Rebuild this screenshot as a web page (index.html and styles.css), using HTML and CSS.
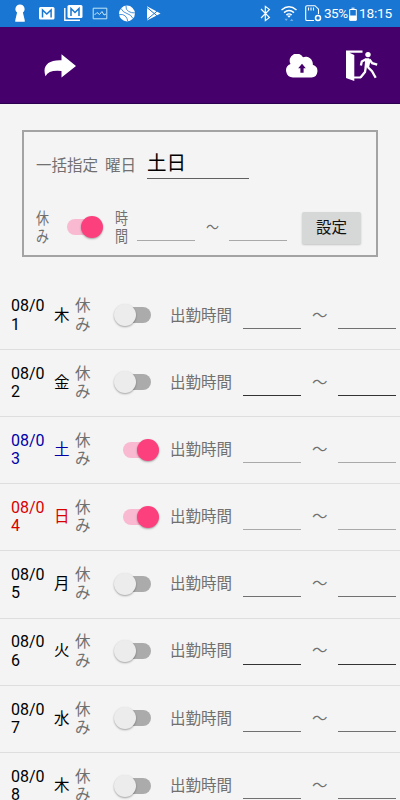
FILE: index.html
```html
<!DOCTYPE html>
<html lang="ja">
<head>
<meta charset="utf-8">
<meta name="viewport" content="width=device-width">
<title>勤務予定</title>
<link rel="stylesheet" href="styles.css">
</head>
<body>
<div class="status">
  <svg class="status-icons" width="170" height="27" viewBox="0 0 170 27" fill="#fff">
    <path d="M20 4.500a4.500 4.500 0 0 1 2.900 8l1.700 7q.5 2.300 0 2.300h-9.200q-.5 0 0-2.300l1.700-7A4.500 4.500 0 0 1 20 4.500z"/>
    <rect x="39" y="7" width="15.500" height="12.500" rx="1.500"/>
    <path d="M42.500 17.500v-7.500l4.300 4 4.300-4v7.500" fill="none" stroke="#1976d2" stroke-width="1.500"/>
    <rect x="67.500" y="5" width="15" height="13" rx="1.500"/>
    <path d="M71 16V8.500l4 4 4-4v7.500" fill="none" stroke="#1976d2" stroke-width="1.500"/>
    <path d="M64.800 8v12.200H80" fill="none" stroke="#fff" stroke-width="1.400"/>
    <path d="M93.200 8.200h13.600v10.600H93.200zM94.500 15l2.500-2.500 2.500 2 2.500-3 2 3.500 2-1" fill="none" stroke="#c4e9f8" stroke-width="1"/>
    <circle cx="127" cy="13.500" r="7.900"/>
    <path d="M121 8.500q2 4 6 5t6 5M126 5.700q-.5 4 2.500 5.700t6.300 1.500M119.300 14.500q4-.5 6 1.500t2.500 5.300" fill="none" stroke="#1976d2" stroke-width=".8"/>
    <path d="M147 6.200v14.400l13.500-7.200z"/>
    <path d="M147 7.500l10 8.300M147 19.500l10-8.300" fill="none" stroke="#1976d2" stroke-width="1"/>
  </svg>
  <div class="status-right">
    <svg width="66" height="27" viewBox="256 0 66 27" fill="none" stroke="#fff" stroke-width="1.100">
      <path d="M260 9l8.500 8.500-4.200 3.200V6.300l4.200 3.200L260 18"/>
      <path d="M280.500 10q7.500-6.500 15 0M283 12.600q5-4.200 10 0M285.300 15q2.700-2.200 5.400 0" stroke-width="1.400"/>
      <path d="M286 15.500h4l-2 2.300z" fill="#fff" stroke="none"/>
      <path d="M283.500 18.800h3.400l-1.700 2.200zM289 21l1.700-2.200 1.700 2.200z" fill="#72aee8" stroke="none"/>
      <path d="M313 20.500h-7q-1.300 0-1.300-1.300V7q0-1.300 1.300-1.300h8l3.500 3.500V14M307.500 7.500v3M310 7.500v3M312.500 7.500v3"/>
      <circle cx="317" cy="18" r="2.500" stroke-width="1.500"/>
    </svg>
    <span class="percent">35%</span>
    <svg class="battery" width="8" height="14" viewBox="0 0 8 14" fill="none" stroke="#fff">
      <path d="M2.500 1.200h3M.7 2.500h6.600v10.800H.7z"/><path d="M1 9h6v4H1z" fill="#fff"/>
    </svg>
    <span class="clock">18:15</span>
  </div>
</div>
<header class="bar">
  <svg class="share" width="32" height="24" viewBox="0 0 32 24" fill="#fff"><path d="M17.500 .2L32 12 17.500 23.400V17Q5 15.500 1.500 22.200C-2 12 4 5.500 17.500 6.200z"/></svg>
  <svg class="cloud" width="32" height="24" viewBox="0 0 32 24" fill="#fff"><path d="M7 23.500a7 7 0 0 1-2.500-13.500A7 7 0 0 1 17 3.300a7.200 7.200 0 0 1 9.800 7.500A6.500 6.500 0 0 1 25.500 23.500z"/><path d="M16 9.700l3.800 4.500h-2.200v4.600h-3.200v-4.600h-2.200z" fill="#45006b"/></svg>
  <svg class="exit" width="33" height="32" viewBox="0 0 33 32" fill="#fff">
    <path d="M0 .5h16.500v2.200H3.500L8.300 5v21.500H15v1.900H8.300v2.600L0 28z"/>
    <circle cx="22" cy="4.600" r="2.700"/>
    <path d="M19 8.200h4.200l1.300 2.800-1.500 6.500h-4.500l.5-6z"/>
    <path d="M19.500 9.500l-3.700 2-.9 4M23.500 9.500l2.700 3.700 5 1.500M19.800 17l-.8 5-4.500 5.500M21.700 17l4.300 4.300 3.700 6.500" fill="none" stroke="#fff" stroke-width="2.300"/>
  </svg>
</header>
<main>
  <section class="bulk">
    <div class="bulk-top"><span>一括指定</span><span>曜日</span><span class="days">土日</span></div>
    <div class="bulk-bottom">
      <span class="narrow">休<br>み</span>
      <span class="switch on"></span>
      <span class="narrow">時<br>間</span>
      <span class="field"></span>
      <span class="narrow">～</span>
      <span class="field"></span>
      <button class="set">設定</button>
    </div>
  </section>
  <ul class="list">
    <li class="row"><span class="date">08/01</span><span class="day">木</span><span class="off">休み</span><span class="switch"></span><span>出勤時間</span><span class="field mid"></span><span class="wave">～</span><span class="field mid"></span></li>
    <li class="row"><span class="date">08/02</span><span class="day">金</span><span class="off">休み</span><span class="switch"></span><span>出勤時間</span><span class="field dark"></span><span class="wave">～</span><span class="field dark"></span></li>
    <li class="row sat"><span class="date">08/03</span><span class="day">土</span><span class="off">休み</span><span class="switch on"></span><span>出勤時間</span><span class="field"></span><span class="wave">～</span><span class="field"></span></li>
    <li class="row sun"><span class="date">08/04</span><span class="day">日</span><span class="off">休み</span><span class="switch on"></span><span>出勤時間</span><span class="field"></span><span class="wave">～</span><span class="field"></span></li>
    <li class="row"><span class="date">08/05</span><span class="day">月</span><span class="off">休み</span><span class="switch"></span><span>出勤時間</span><span class="field mid"></span><span class="wave">～</span><span class="field mid"></span></li>
    <li class="row"><span class="date">08/06</span><span class="day">火</span><span class="off">休み</span><span class="switch"></span><span>出勤時間</span><span class="field dark"></span><span class="wave">～</span><span class="field dark"></span></li>
    <li class="row"><span class="date">08/07</span><span class="day">水</span><span class="off">休み</span><span class="switch"></span><span>出勤時間</span><span class="field mid"></span><span class="wave">～</span><span class="field mid"></span></li>
    <li class="row"><span class="date">08/08</span><span class="day">木</span><span class="off">休み</span><span class="switch"></span><span>出勤時間</span><span class="field mid"></span><span class="wave">～</span><span class="field mid"></span></li>
  </ul>
</main>
</body>
</html>
```

FILE: styles.css
```css
* { box-sizing: border-box; }
body {
  margin: 0;
  height: 800px;
  overflow: hidden;
  background: #f4f4f4;
  color: #707070;
  font: 15.5px/18.3px Roboto, "Noto Sans CJK JP", sans-serif;
}
.status {
  display: flex;
  justify-content: space-between;
  height: 27px;
  background: #1976d2;
  color: #fff;
}
.status-right {
  display: flex;
  align-items: center;
  padding-right: 8px;
}
.percent { width: 26px; font-size: 13.5px; letter-spacing: -0.5px; padding-left: 1px; }
.battery { margin-right: 2px; }
.clock { width: 33px; font-size: 13.7px; letter-spacing: -0.2px; }
.bar {
  display: flex;
  align-items: center;
  height: 77px;
  padding: 2px 21px 0 44px;
  background: #45006b;
  border-bottom: 1px solid #2c0050;
}
.share { margin-right: auto; }
.cloud { margin-right: 28px; }

.bulk {
  width: 356px;
  height: 127px;
  margin: 26px 0 0 22px;
  padding: 18px 0 0 12px;
  border: 2px solid #a3a3a3;
}
.bulk-top { display: flex; align-items: center; height: 33px; gap: 7px; }
.bulk-top .days {
  width: 102px;
  height: 32px;
  margin: -7px 0 0 4px;
  border-bottom: 1px solid #606060;
  color: #000;
  font-size: 19.5px;
  line-height: 34px;
}
.bulk-bottom {
  display: grid;
  grid-template-columns: 24px 55px 22px 69px 23px 73px 59px;
  align-items: center;
  height: 37px;
  margin-top: 25px;
}
.narrow {
  width: 16px;
  padding-top: 2px;
  white-space: nowrap;
  transform: scaleX(.84);
  transform-origin: left;
}
.set {
  height: 32px;
  margin-top: 2px;
  padding: 0;
  border: 0;
  border-radius: 2px;
  background: #d6d7d7;
  box-shadow: 0 1px 2px #0003;
  color: #111;
  font: inherit;
}
.field {
  width: 58px;
  height: 28px;
  border-bottom: 1px solid #a9a9a9;
}
.field.mid { border-color: #707070; }
.field.dark { border-color: #333; }

.switch {
  display: flex;
  align-items: center;
  width: 46px;
  height: 24px;
  padding: 0 9px;
}
.switch::before {
  content: "";
  width: 28px;
  height: 16px;
  flex: none;
  border-radius: 8px;
  background: #ababab;
}
.switch::after {
  content: "";
  width: 22px;
  height: 22px;
  flex: none;
  margin-left: -37px;
  border-radius: 50%;
  background: #ececec;
  box-shadow: 0 1px 2px #0005;
}
.switch.on::before { background: #f9b9d0; }
.switch.on::after { margin-left: -14px; background: #fc407e; }
.bulk-bottom .switch { padding-left: 7px; }

.list { margin: 25.6px 0 0; padding: 0; list-style: none; }
.row {
  display: grid;
  grid-template-columns: 43px 21px 39px 56px 73px 68px 27px 58px;
  align-items: center;
  height: 67.2px;
  padding-left: 11px;
  border-bottom: 1px solid #dedede;
}
.row .field { height: 26px; }
.row .switch { margin-top: -1px; }
.wave { padding-left: 1px; }
.date { width: 38px; word-break: break-all; font-size: 16px; }
.date, .day { color: #000; }
.off { width: 16px; }
.sat .date, .sat .day { color: #0000a8; }
.sun .date, .sun .day { color: #d80000; }
```
